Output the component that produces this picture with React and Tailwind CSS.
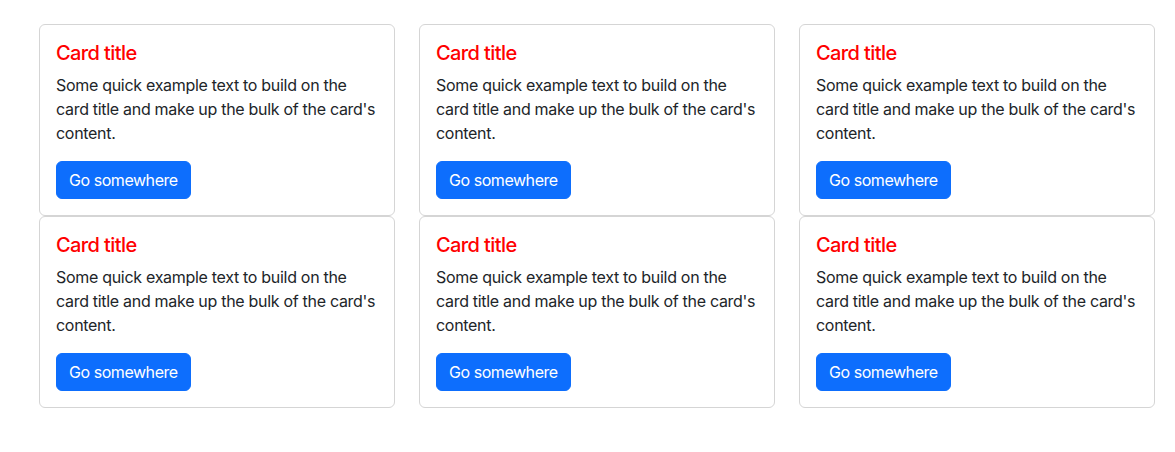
import React from 'react';

const Card = () => (
  <div className="border border-[#d5d5d5] rounded-md p-4 bg-white">
    <h5 className="text-[20px] leading-[24px] font-medium text-[#ff0000] mb-2 tracking-[-0.6px]">Card title</h5>
    <p className="text-base leading-6 text-[#212529] mb-4 tracking-[-0.3px]">
      Some quick example text to build on the card title and make up the bulk of the card's content.
    </p>
    <a href="#" className="inline-block bg-[#0d6efd] text-white text-base leading-6 px-3 py-[6px] rounded-md border border-[#0d6efd] tracking-[-0.45px]">
      Go somewhere
    </a>
  </div>
);

const App = () => {
  return (
    <div className="min-h-screen bg-white font-['Inter','Liberation_Sans',sans-serif] pt-6">
      <div className="ml-[39px] w-[1116px] grid grid-cols-3 gap-x-6">
        {[0, 1, 2, 3, 4, 5].map((i) => (
          <Card key={i} />
        ))}
      </div>
    </div>
  );
};

export default App;
